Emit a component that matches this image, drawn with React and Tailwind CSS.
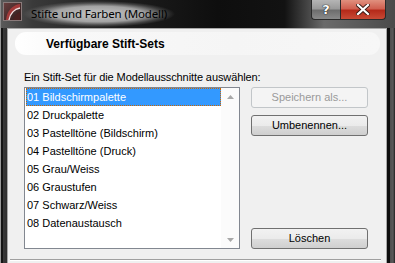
import React from "react";

const items = [
  "01 Bildschirmpalette",
  "02 Druckpalette",
  "03 Pastelltöne (Bildschirm)",
  "04 Pastelltöne (Druck)",
  "05 Grau/Weiss",
  "06 Graustufen",
  "07 Schwarz/Weiss",
  "08 Datenaustausch",
];

function AppIcon() {
  return (
    <svg width="19" height="19" viewBox="0 0 19 19">
      <defs>
        <linearGradient id="ig" x1="0" y1="0" x2="1" y2="1">
          <stop offset="0" stopColor="#6a4040" />
          <stop offset="1" stopColor="#2a1a1a" />
        </linearGradient>
      </defs>
      <rect x="0.5" y="0.5" width="18" height="18" fill="url(#ig)" stroke="#8a7a7a" />
      <path d="M3 18 C4 9 9 3 17 2 L17 6 C11 7 7 12 6 18 Z" fill="#a33a3a" />
      <path d="M6 18 C7 12 11 7 17 6" stroke="#f0e0e0" strokeWidth="1.4" fill="none" />
      <path d="M10 18 C11 14 14 11 17 10 L17 18 Z" fill="#4a2020" />
    </svg>
  );
}

function WinButton({ children, disabled }) {
  return (
    <div
      className={
        "h-[21px] w-full flex items-center justify-center rounded-[3px] border text-[11px] " +
        (disabled
          ? "border-[#c2c6c9] bg-[#f4f4f4] text-[#9a9a9a]"
          : "border-[#707070] bg-[linear-gradient(180deg,#f2f2f2_0%,#ebebeb_50%,#dddddd_51%,#cfcfcf_100%)] text-black")
      }
    >
      {children}
    </div>
  );
}

export default function App() {
  return (
    <div
      className="w-[395px] h-[263px] overflow-hidden flex flex-col bg-[#2a2a2a]"
      style={{ fontFamily: '"Liberation Sans", Arial, sans-serif' }}
    >
      {/* Title bar */}
      <div className="h-[28px] flex items-start shrink-0 bg-[linear-gradient(90deg,#5a5a5a_0%,#3a3a3a_8%,#1e1e1e_30%,#0e0e0e_55%,#121212_72%,#6a6a6a_82%,#4a4a4a_100%)] border-l border-[#8a8a8a]">
        <div className="ml-[2px] mt-[2px]">
          <AppIcon />
        </div>
        <div className="ml-[1px] mt-[1px] h-[26px] px-[8px] flex items-center bg-[radial-gradient(ellipse_closest-side_at_center,rgba(205,205,205,0.95)_0%,rgba(185,185,185,0.85)_60%,rgba(140,140,140,0.35)_85%,rgba(120,120,120,0)_100%)]">
          <span
            className="text-[11.5px] tracking-[-0.15px] text-black leading-none"
            style={{ fontFamily: '"Noto Sans", "Open Sans", sans-serif' }}
          >
            Stifte und Farben (Modell)
          </span>
        </div>
        <div className="ml-auto mr-[9px] flex">
          <div className="w-[29px] h-[20px] rounded-bl-[4px] border border-t-0 border-r-0 border-[#2a2a2a] bg-[linear-gradient(180deg,#b5b5b5_0%,#9a9a9a_45%,#6e6e6e_55%,#8a8a8a_100%)] flex items-center justify-center">
            <span
              className="text-white font-bold text-[13px] leading-none [text-shadow:0_0_1px_#000,0_0_1px_#000]"
              style={{ fontFamily: '"DejaVu Sans", sans-serif' }}
            >
              ?
            </span>
          </div>
          <div className="w-[46px] h-[20px] rounded-br-[4px] border border-t-0 border-[#2a2a2a] bg-[linear-gradient(180deg,#e0907e_0%,#d06050_45%,#b52a1a_55%,#c84a35_100%)] flex items-center justify-center">
            <svg width="14" height="11" viewBox="0 0 14 11">
              <path d="M2 1 L12 10 M12 1 L2 10" stroke="#3a1a14" strokeWidth="4" strokeLinecap="square" />
              <path d="M2 1 L12 10 M12 1 L2 10" stroke="#ffffff" strokeWidth="2.2" strokeLinecap="square" />
            </svg>
          </div>
        </div>
      </div>

      <div className="flex flex-1 min-h-0">
        {/* left frame */}
        <div className="w-[7px] shrink-0 bg-[linear-gradient(90deg,#9a9a9a_0px,#9a9a9a_1px,#151515_1px,#151515_3px,#3a3a3a_3px,#303030_7px)]" />
        {/* client */}
        <div className="flex-1 bg-[#f0f0f0] border-l border-t border-r border-[#a8a8a8] flex flex-col text-black">
          <div className="mt-[3px] ml-[7px] mr-[6px] h-[23px] rounded-[11px] bg-[linear-gradient(90deg,#ffffff_0%,#f8f8f8_15%,#f5f5f5_60%,#f7f7f7_100%)] flex items-center pl-[31px]">
            <span className="text-[12px] font-bold leading-none">Verfügbare Stift-Sets</span>
          </div>

          <div className="mt-[16px] pl-[16px] text-[11px] leading-[13px] tracking-[-0.1px]">
            Ein Stift-Set für die Modellausschnitte auswählen:
          </div>

          <div className="mt-[3px] pl-[16px] flex gap-[11px]">
            <div className="w-[216px] h-[162px] border border-[#828790] bg-white flex">
              <div className="flex-1 pl-[1px] text-[11px]">
                {items.map((t, i) => (
                  <div
                    key={t}
                    className={
                      "h-[18px] leading-[16px] border " +
                      (i === 0
                        ? "bg-[#3399ff] text-white border-dotted border-[#cc6600]"
                        : "border-transparent")
                    }
                  >
                    {t}
                  </div>
                ))}
              </div>
              <div className="w-[18px] flex flex-col justify-between bg-[#fbfbfb]">
                <div className="h-[17px] flex items-center justify-center">
                  <svg width="7" height="4" viewBox="0 0 7 4">
                    <path d="M0 4 L3.5 0 L7 4 Z" fill="#a8a8a8" />
                  </svg>
                </div>
                <div className="h-[17px] flex items-center justify-center">
                  <svg width="7" height="4" viewBox="0 0 7 4">
                    <path d="M0 0 L3.5 4 L7 0 Z" fill="#a8a8a8" />
                  </svg>
                </div>
              </div>
            </div>

            <div className="w-[117px] h-[162px] flex flex-col">
              <WinButton disabled>Speichern als...</WinButton>
              <div className="mt-[7px]">
                <WinButton>Umbenennen...</WinButton>
              </div>
              <div className="mt-auto">
                <WinButton>Löschen</WinButton>
              </div>
            </div>
          </div>

          <div className="mt-[10px] ml-[2px] mr-[5px] h-[2px] border-t border-[#a0a0a0] bg-white" />
        </div>
        {/* right frame */}
        <div className="w-[8px] shrink-0 bg-[linear-gradient(90deg,#0e0e0e_0px,#0e0e0e_3px,#4e4e4e_3px,#5a5a5a_6px,#202020_8px)]" />
      </div>
    </div>
  );
}
